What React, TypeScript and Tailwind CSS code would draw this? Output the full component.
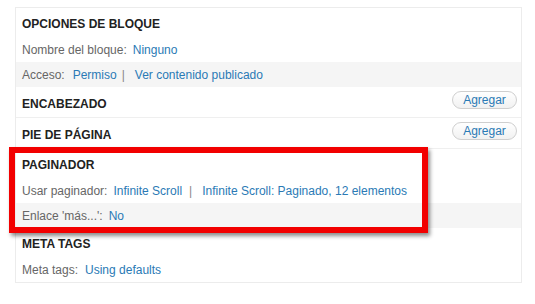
import React from 'react'

const font = { fontFamily: '"Liberation Sans", Arial, sans-serif' }

const Heading = ({ title, action }: { title: string; action?: boolean }) => (
    <div className={`flex items-center justify-between pl-[6px] pr-[4px] ${action ? 'h-[30px]' : 'h-[29px] pt-[2px]'}`}>
        <span className={`text-[12px] font-bold text-[#222] ${action ? 'mt-[3px]' : ''}`}>{title}</span>
        {action && (
            <button className="mb-[4px] h-[18px] w-[65px] rounded-full border border-[#cfcfcf] bg-gradient-to-b from-white to-[#f1f1f1] text-[12px] leading-none text-[#2a7ab5]">
                Agregar
            </button>
        )}
    </div>
)

const Row = ({ label, gray, children }: { label: string; gray?: boolean; children: React.ReactNode }) => (
    <div className={`flex h-[25px] items-center pl-[6px] text-[12px] text-[#666] ${gray ? 'bg-[#f5f5f5]' : ''}`}>
        <span>{label}</span>
        {children}
    </div>
)

const Link = ({ children, className = '' }: { children: React.ReactNode; className?: string }) => (
    <a className={`text-[#2a7ab5] ${className}`}>{children}</a>
)

const Sep = ({ className = '' }: { className?: string }) => <span className={`text-[#888] ${className}`}>|</span>

export default function App() {
    return (
        <div className="relative h-[304px] w-[535px] bg-white" style={font}>
            <div className="absolute left-[15px] top-[7px] w-[507px] border border-[#ececec] bg-white">
                {/* opciones */}
                <Heading title="OPCIONES DE BLOQUE" />
                <Row label="Nombre del bloque:">
                    <Link className="ml-[6px]">Ninguno</Link>
                </Row>
                <Row label="Acceso:" gray>
                    <Link className="ml-[8px]">Permiso</Link>
                    <Sep className="ml-[5px] mr-[10px]" />
                    <Link>Ver contenido publicado</Link>
                </Row>
                <Heading title="ENCABEZADO" action />
                <div className="border-t border-[#efefef]">
                    <Heading title="PIE DE PÁGINA" action />
                </div>
                <div className="border-t border-[#efefef]">
                    <Heading title="PAGINADOR" />
                    <Row label="Usar paginador:">
                        <Link className="ml-[6px]">Infinite Scroll</Link>
                        <Sep className="ml-[7px] mr-[10px]" />
                        <Link>Infinite Scroll: Paginado, 12 elementos</Link>
                    </Row>
                    <Row label="Enlace 'más...':" gray>
                        <Link className="ml-[6px]">No</Link>
                    </Row>
                </div>
                <Heading title="META TAGS" />
                <Row label="Meta tags:">
                    <Link className="ml-[7px]">Using defaults</Link>
                </Row>
            </div>
            {/* red highlight */}
            <div className="absolute left-[9px] top-[147px] h-[86px] w-[419px] border-[6px] border-[#f20000] shadow-[2px_3px_4px_rgba(0,0,0,0.45)]" />
        </div>
    )
}
